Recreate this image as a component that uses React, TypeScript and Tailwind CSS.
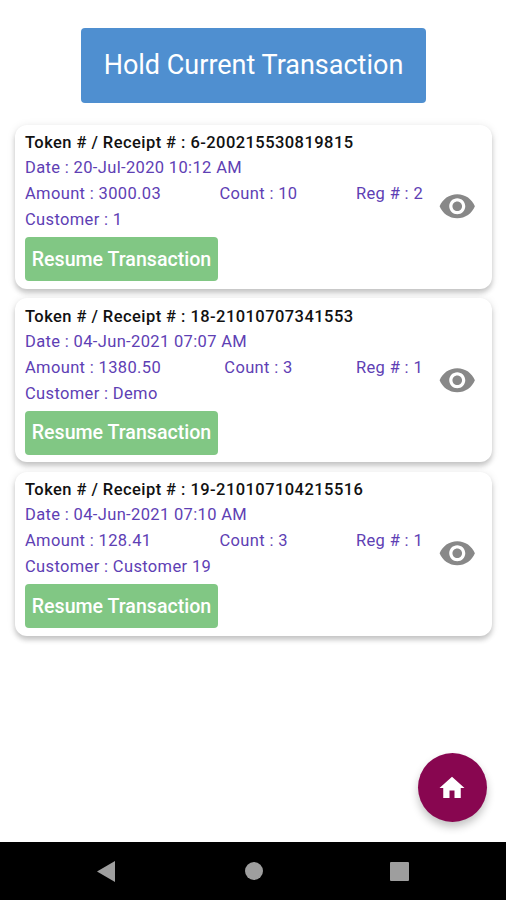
import { MdHome, MdVisibility } from "react-icons/md";

type HeldTransaction = {
  token: string;
  date: string;
  amount: string;
  count: number;
  register: number;
  customer: string;
};

const transactions: HeldTransaction[] = [
  {
    token: "6-200215530819815",
    date: "20-Jul-2020 10:12 AM",
    amount: "3000.03",
    count: 10,
    register: 2,
    customer: "1"
  },
  {
    token: "18-21010707341553",
    date: "04-Jun-2021 07:07 AM",
    amount: "1380.50",
    count: 3,
    register: 1,
    customer: "Demo"
  },
  {
    token: "19-210107104215516",
    date: "04-Jun-2021 07:10 AM",
    amount: "128.41",
    count: 3,
    register: 1,
    customer: "Customer 19"
  }
];

function TransactionCard({ item }: { item: HeldTransaction }) {
  return (
    <div className="flex h-[164px] items-center rounded-xl bg-white pl-[10px] pr-[15.5px] shadow-[0_4px_5px_rgba(0,0,0,0.18),0_1px_8px_rgba(0,0,0,0.1)]">
      <div className="h-full w-[398px] pt-[5.5px] text-[16.5px] tracking-[0.35px] text-[#5e40b4]">
        <h2 className="h-[25px] leading-[25px] font-medium tracking-[0.44px] text-[#111111]">
          Token # / Receipt # : {item.token}
        </h2>
        <p className="h-[25px] leading-[25px]">Date : {item.date}</p>
        <div className="flex h-[26px] justify-between leading-[27px]">
          <span>Amount : {item.amount}</span>
          <span>Count : {item.count}</span>
          <span>Reg # : {item.register}</span>
        </div>
        <p className="h-[26px] leading-[27px]">Customer : {item.customer}</p>
        <button className="mt-[5px] flex h-11 w-[193px] items-center justify-center rounded bg-[#81c784] pt-px text-[19.6px] font-medium tracking-normal whitespace-nowrap text-white">
          Resume Transaction
        </button>
      </div>
      <button className="ml-auto text-[#888888]" aria-label="View transaction">
        <MdVisibility className="size-[38.5px]" />
      </button>
    </div>
  );
}

export default function App() {
  return (
    <div className="relative flex h-[900px] w-[506px] flex-col overflow-hidden bg-white font-[Roboto,sans-serif]">
      <main className="flex flex-1 flex-col pt-[27.5px] pr-[14px] pl-[15px]">
        <button className="ml-[66px] h-[75px] w-[345px] shrink-0 rounded bg-[#4f8fd0] text-[27px] whitespace-nowrap text-white">
          Hold Current Transaction
        </button>
        <div className="mt-[22px] flex flex-col gap-[9.5px]">
          {transactions.map((item) => (
            <TransactionCard key={item.token} item={item} />
          ))}
        </div>
      </main>

      {/* Floating home button */}
      <button
        className="absolute right-[19px] bottom-[78px] flex size-[69px] items-center justify-center rounded-full bg-[#880650] pr-px text-white shadow-[0_5px_8px_rgba(0,0,0,0.24)]"
        aria-label="Home"
      >
        <MdHome className="size-[30px]" />
      </button>

      {/* System navigation bar */}
      <nav className="flex h-[58px] shrink-0 items-center bg-black pl-[97px] text-[#9e9e9e]">
        <svg className="h-[21px] w-[18px]" viewBox="0 0 18 21" fill="currentColor">
          <path d="M18 0v21L0 10.500z" />
        </svg>
        <span className="ml-[129.5px] size-[18px] rounded-full bg-[#9e9e9e]" />
        <span className="ml-[127.5px] size-[19px] rounded-[1px] bg-[#9e9e9e]" />
      </nav>
    </div>
  );
}
